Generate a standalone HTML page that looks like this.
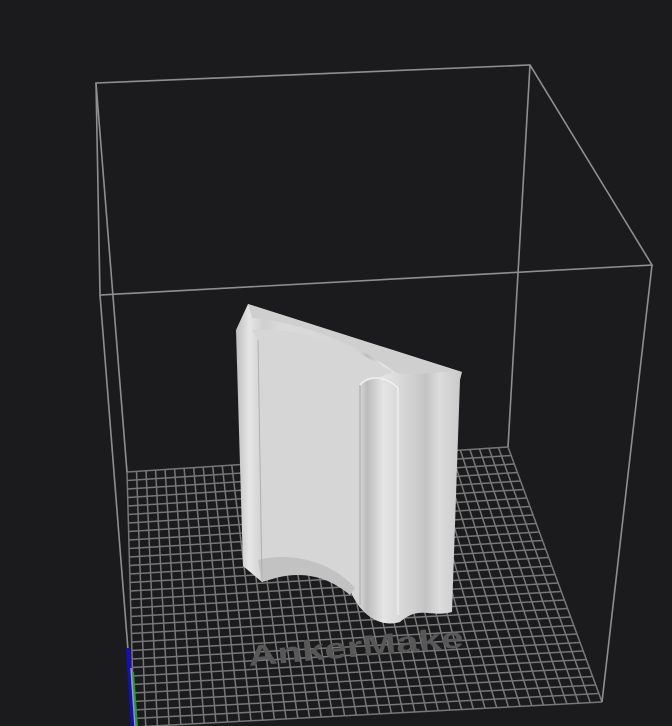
<!DOCTYPE html>
<html><head><meta charset="utf-8"><style>
html,body{margin:0;padding:0;background:#1b1b1d;width:672px;height:726px;overflow:hidden}
svg{display:block}
</style></head><body>
<svg id="s" width="672" height="726" viewBox="0 0 672 726">
<defs>
<linearGradient id="g1" x1="0" x2="1" y1="0" y2="0">
<stop offset="0" stop-color="#bdbdbd"/><stop offset="0.06" stop-color="#e6e6e6"/><stop offset="0.12" stop-color="#cfcfcf"/>
<stop offset="0.2" stop-color="#dadada"/><stop offset="0.55" stop-color="#d4d4d4"/><stop offset="0.58" stop-color="#bcbcbc"/>
<stop offset="0.65" stop-color="#e4e4e4"/><stop offset="0.78" stop-color="#d0d0d0"/><stop offset="0.84" stop-color="#c4c4c4"/>
<stop offset="0.9" stop-color="#dcdcdc"/><stop offset="1" stop-color="#c8c8c8"/></linearGradient>
</defs>
<g id="grid" stroke="#777" stroke-width="1.5" fill="none"></g>
<text x="0" y="0" transform="translate(249,666) rotate(-5)" font-family="Liberation Sans, sans-serif" font-weight="bold" font-size="29" fill="#585858" textLength="216" lengthAdjust="spacingAndGlyphs">AnkerMake</text>
<g stroke="#8f8f8f" stroke-width="1.6" fill="none">
<polygon points="96,83 530,65 652,265 100,295"/>
<line x1="96" y1="83" x2="127" y2="472"/>
<line x1="530" y1="65" x2="508" y2="447"/>
<line x1="100" y1="295" x2="134" y2="726"/>
<line x1="652" y1="265" x2="602" y2="702"/>
</g>
<path d="M236,330 L248,304 L462,372 L460,380 L452,612 C430,618 420,605 400,622 C380,628 360,615 350,590 C335,565 300,570 262,582 L243,566 Z" fill="url(#g1)"/>
<path d="M248,304 L252,318 C300,322 360,345 395,372 C410,378 440,370 462,372 Z" fill="#cfcfcf"/>
<path d="M252,330 C300,326 360,350 392,372 C380,378 365,380 360,385 L360,600 C330,570 300,570 262,580 L258,340 Z" fill="#d6d6d6"/>
<path d="M258,560 C290,552 330,560 355,588 L350,595 C320,570 290,572 262,582 Z" fill="#c2c2c2"/>
<line x1="360" y1="385" x2="360" y2="605" stroke="#a8a8a8" stroke-width="1"/>
<line x1="258" y1="340" x2="262" y2="580" stroke="#b0b0b0" stroke-width="1"/>
<path d="M360,385 C368,375 385,375 398,388 L398,615" fill="none" stroke="#f0f0f0" stroke-width="1.5"/>
<line x1="128" y1="648" x2="133" y2="726" stroke="#1010c0" stroke-width="4"/>
<line x1="133" y1="672" x2="137" y2="726" stroke="#20a020" stroke-width="2"/>
<line x1="131" y1="668" x2="135" y2="726" stroke="#9a9ac8" stroke-width="1.5"/>
</svg>
<script>
(function(){
var g=document.getElementById('grid'),ns='http://www.w3.org/2000/svg';
var BL=[127,472],BR=[508,447],FR=[602,702],FL=[134,727];
function P(u,v){var tx=BL[0]+(BR[0]-BL[0])*u,ty=BL[1]+(BR[1]-BL[1])*u,bx=FL[0]+(FR[0]-FL[0])*u,by=FL[1]+(FR[1]-FL[1])*u;return [tx+(bx-tx)*v,ty+(by-ty)*v];}
function L(a,b){var l=document.createElementNS(ns,'line');l.setAttribute('x1',a[0]);l.setAttribute('y1',a[1]);l.setAttribute('x2',b[0]);l.setAttribute('y2',b[1]);g.appendChild(l);}
var NU=40,NV=30;
for(var i=0;i<=NU;i++){L(P(i/NU,0),P(i/NU,1));}
for(var j=0;j<=NV;j++){L(P(0,j/NV),P(1,j/NV));}
})();
</script>
</body></html>
